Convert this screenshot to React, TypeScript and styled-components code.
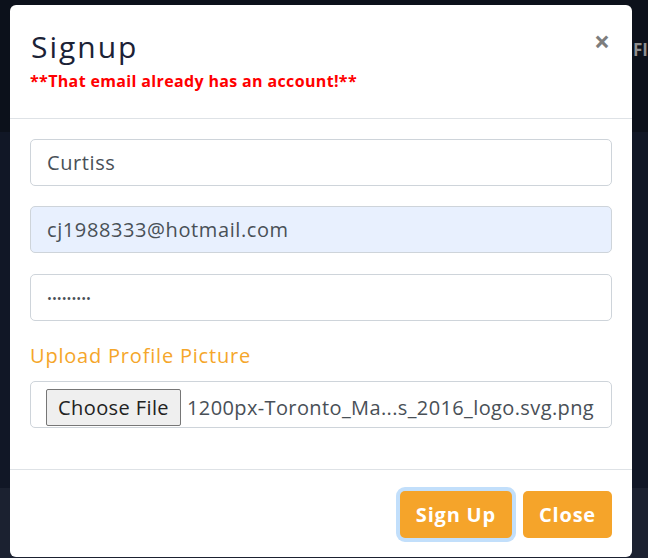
import React from "react";
import styled, { createGlobalStyle } from "styled-components";

const GlobalStyle = createGlobalStyle`
  html, body {
    margin: 0;
    padding: 0;
    width: 648px;
    height: 558px;
    overflow: hidden;
    background: #111726;
  }
  * {
    box-sizing: border-box;
  }
`;

const fontStack = `"Open Sans", "Liberation Sans", sans-serif`;

function App() {
  return (
    <>
      <GlobalStyle />
      <Page>
        <NavBand>
          <NavItem>FI</NavItem>
        </NavBand>
        <MiddleBand />
        <BottomBand />
        <ModalBox>
          <ModalHeader>
            <HeaderText>
              <ModalTitle>Signup</ModalTitle>
              <ErrorText>**That email already has an account!**</ErrorText>
            </HeaderText>
            <CloseX>×</CloseX>
          </ModalHeader>

          <ModalBody>
            <FormInput type="text" defaultValue="Curtiss" />
            <FormInput type="email" defaultValue="cj1988333@hotmail.com" autofilled />
            <FormInput type="password" defaultValue="123456789" gapTop />
            <UploadLabel>Upload Profile Picture</UploadLabel>
            <FileBox>
              <ChooseBtn type="button">Choose File</ChooseBtn>
              <FileName>1200px-Toronto_Ma...s_2016_logo.svg.png</FileName>
            </FileBox>
          </ModalBody>

          <ModalFooter>
            <OrangeBtn focused>Sign Up</OrangeBtn>
            <OrangeBtn>Close</OrangeBtn>
          </ModalFooter>
        </ModalBox>
      </Page>
    </>
  );
}

export default App;

const Page = styled.div`
  position: relative;
  width: 648px;
  height: 558px;
  display: flex;
  flex-direction: column;
  font-family: ${fontStack};
`;

const NavBand = styled.div`
  height: 132px;
  background: #0c111b;
  padding-left: 633px;
  padding-top: 38px;
`;

const NavItem = styled.span`
  color: #8e8e8e;
  font-weight: 700;
  font-size: 17px;
  white-space: nowrap;
`;

const MiddleBand = styled.div`
  height: 356px;
  background: #111726;
`;

const BottomBand = styled.div`
  flex: 1;
  background: #1b2130;
`;

const ModalBox = styled.div`
  position: absolute;
  left: 10px;
  top: 5px;
  width: 622px;
  background: #fff;
  border-radius: 6px;
  display: flex;
  flex-direction: column;
`;

const ModalHeader = styled.div`
  display: flex;
  justify-content: space-between;
  align-items: flex-start;
  height: 114px;
  padding: 21px 20px 0 21px;
  border-bottom: 1px solid #dee2e6;
`;

const HeaderText = styled.div`
  display: flex;
  flex-direction: column;
`;

const ModalTitle = styled.h4`
  margin: 0;
  font-size: 30px;
  font-weight: 400;
  letter-spacing: 2px;
  line-height: 42px;
  color: #1b2236;
`;

const ErrorText = styled.p`
  margin: 1px 0 0 -1px;
  font-size: 16px;
  font-weight: 700;
  letter-spacing: 0.35px;
  line-height: 24px;
  color: #ff0000;
`;

const CloseX = styled.span`
  font-size: 28px;
  font-weight: 700;
  line-height: 24px;
  color: #7d7d7d;
  margin-top: 3px;
  margin-right: 2px;
  cursor: pointer;
`;

const ModalBody = styled.div`
  display: flex;
  flex-direction: column;
  padding: 20px 20px 21px 20px;
  border-bottom: 1px solid #dee2e6;
`;

const FormInput = styled.input<{ autofilled?: boolean; gapTop?: boolean }>`
  height: 47px;
  width: 100%;
  margin-top: ${(p) => (p.gapTop ? "1px" : "0")};
  margin-bottom: 20px;
  padding: 8px 16px;
  font-family: ${fontStack};
  font-size: 20px;
  letter-spacing: 0.6px;
  color: #495057;
  background: ${(p) => (p.autofilled ? "#e8f0fe" : "#fff")};
  border: 1px solid #ced4da;
  border-radius: 5px;
  outline: none;

  &[type="password"] {
    font-size: 13px;
    letter-spacing: 0px;
  }
`;

const UploadLabel = styled.label`
  font-size: 20px;
  letter-spacing: 0.8px;
  line-height: 30px;
  color: #f5a62a;
  margin-bottom: 10px;
`;

const FileBox = styled.div`
  display: flex;
  align-items: flex-end;
  height: 47px;
  margin-bottom: 20px;
  padding: 0 10px 1px 15px;
  border: 1px solid #ced4da;
  border-radius: 5px;
  gap: 6px;
  overflow: hidden;
`;

const ChooseBtn = styled.button`
  flex-shrink: 0;
  width: 135px;
  height: 37px;
  padding: 0;
  font-family: ${fontStack};
  font-size: 20px;
  letter-spacing: 0.4px;
  white-space: nowrap;
  color: #222;
  background: #efefef;
  border: 1px solid #767676;
  border-radius: 2px;
`;

const FileName = styled.span`
  font-size: 20px;
  letter-spacing: 0.38px;
  line-height: 37px;
  color: #495057;
  white-space: nowrap;
`;

const ModalFooter = styled.div`
  display: flex;
  justify-content: flex-end;
  gap: 11px;
  padding: 21px 20px 19px 20px;
`;

const OrangeBtn = styled.button<{ focused?: boolean }>`
  height: 47px;
  padding: 0 16px;
  font-family: ${fontStack};
  font-size: 20px;
  font-weight: 700;
  letter-spacing: 0.8px;
  color: #fff;
  background: #f5a42a;
  border: none;
  border-radius: 5px;
  box-shadow: ${(p) => (p.focused ? "0 0 0 4px #c2dffb" : "none")};
  cursor: pointer;
`;
